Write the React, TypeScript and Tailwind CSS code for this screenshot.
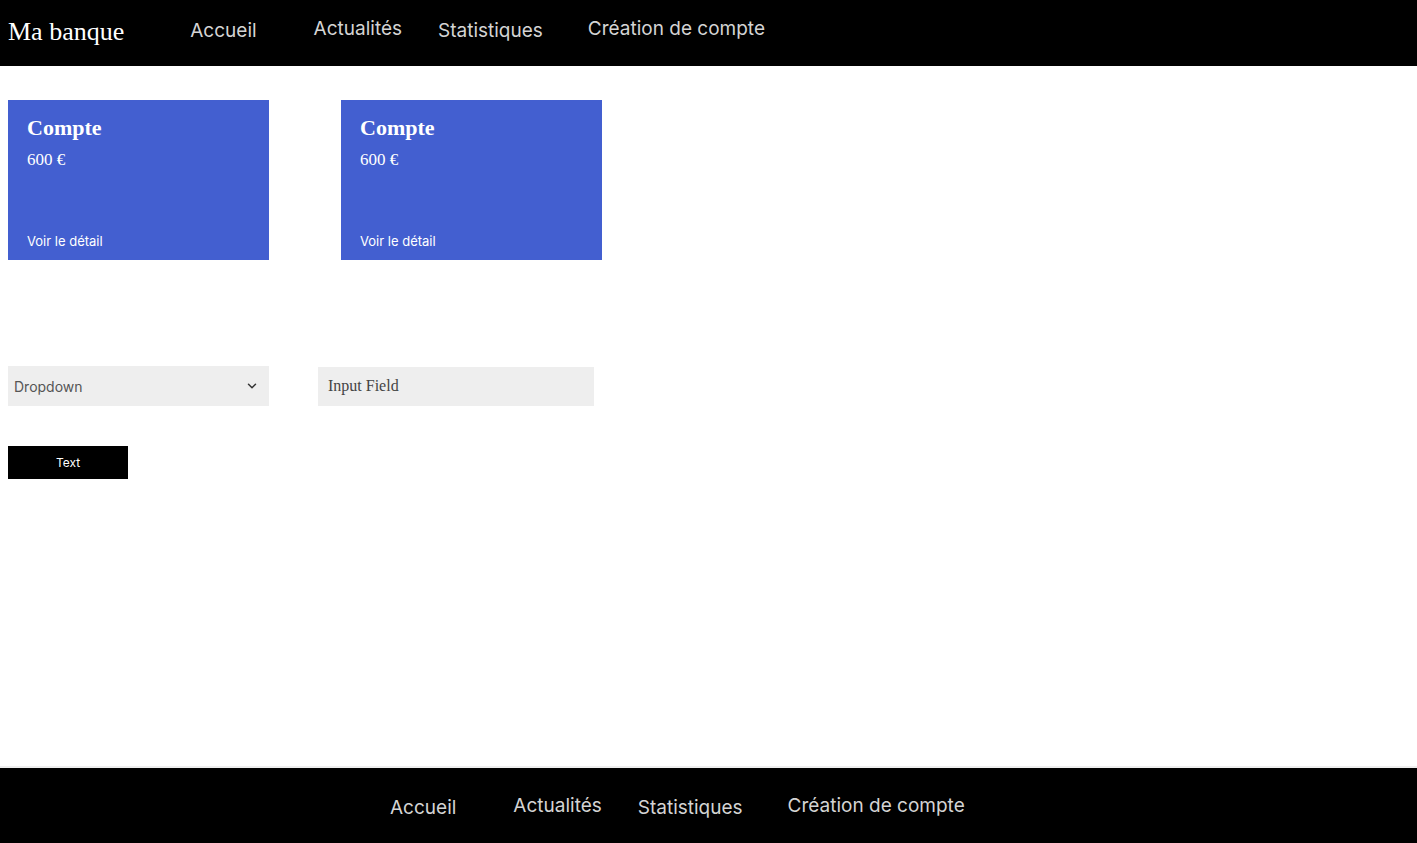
import { ChevronDown } from 'lucide-react';

const serif = "font-['Liberation_Serif','DejaVu_Serif',serif]";
const sans = "font-['Inter','Roboto',sans-serif]";

function NavLinks({ className }: { className?: string }) {
  return (
    <nav className={`flex items-center text-[19px] text-[#d4d4d4] ${sans} ${className ?? ''}`}>
      <a className="mt-[4px]">Accueil</a>
      <a className="ml-[57px]">Actualités</a>
      <a className="ml-[36px] mt-[4px]">Statistiques</a>
      <a className="ml-[45px]">Création de compte</a>
    </nav>
  );
}

function AccountCard() {
  return (
    <div className="w-[261px] h-[160px] bg-[#435fd0] text-white px-[19px] pt-[14px] pb-[9px] flex flex-col">
      <h2 className={`${serif} font-bold text-[22px] leading-[28px]`}>Compte</h2>
      <p className={`${serif} text-[17px] mt-[5px]`}>600 €</p>
      <a className={`${sans} text-[13px] mt-auto`}>Voir le détail</a>
    </div>
  );
}

export default function App() {
  return (
    <div className="min-h-[843px] flex flex-col bg-white">
      <header className="h-[66px] bg-black flex items-center px-[8px]">
        <span className={`${serif} text-[26px] text-white -mt-[4px]`}>Ma banque</span>
        <NavLinks className="ml-[66px] -mt-[7px]" />
      </header>

      <main className="flex-1 px-[8px] pt-[34px]">
        <div className="flex gap-[72px]">
          <AccountCard />
          <AccountCard />
        </div>

        <div className="flex items-center gap-[49px] mt-[106px]">
          <div className={`w-[261px] h-[40px] bg-[#eeeeee] flex items-center justify-between pl-[6px] pr-[10px] ${sans} text-[14px] text-[#555]`}>
            <span>Dropdown</span>
            <ChevronDown className="w-[14px] h-[14px] text-[#333]" strokeWidth={2.5} />
          </div>
          <input
            placeholder="Input Field"
            className={`w-[276px] h-[39px] bg-[#eeeeee] px-[10px] ${serif} text-[16px] placeholder:text-[#444] outline-none`}
          />
        </div>

        <button className={`mt-[40px] w-[120px] h-[33px] bg-black text-white text-[12px] ${sans}`}>
          Text
        </button>
      </main>

      <footer className="h-[77px] bg-black border-t-[2px] border-[#eeeeee] flex items-center pl-[390px]">
        <NavLinks className="mt-[2px]" />
      </footer>
    </div>
  );
}
